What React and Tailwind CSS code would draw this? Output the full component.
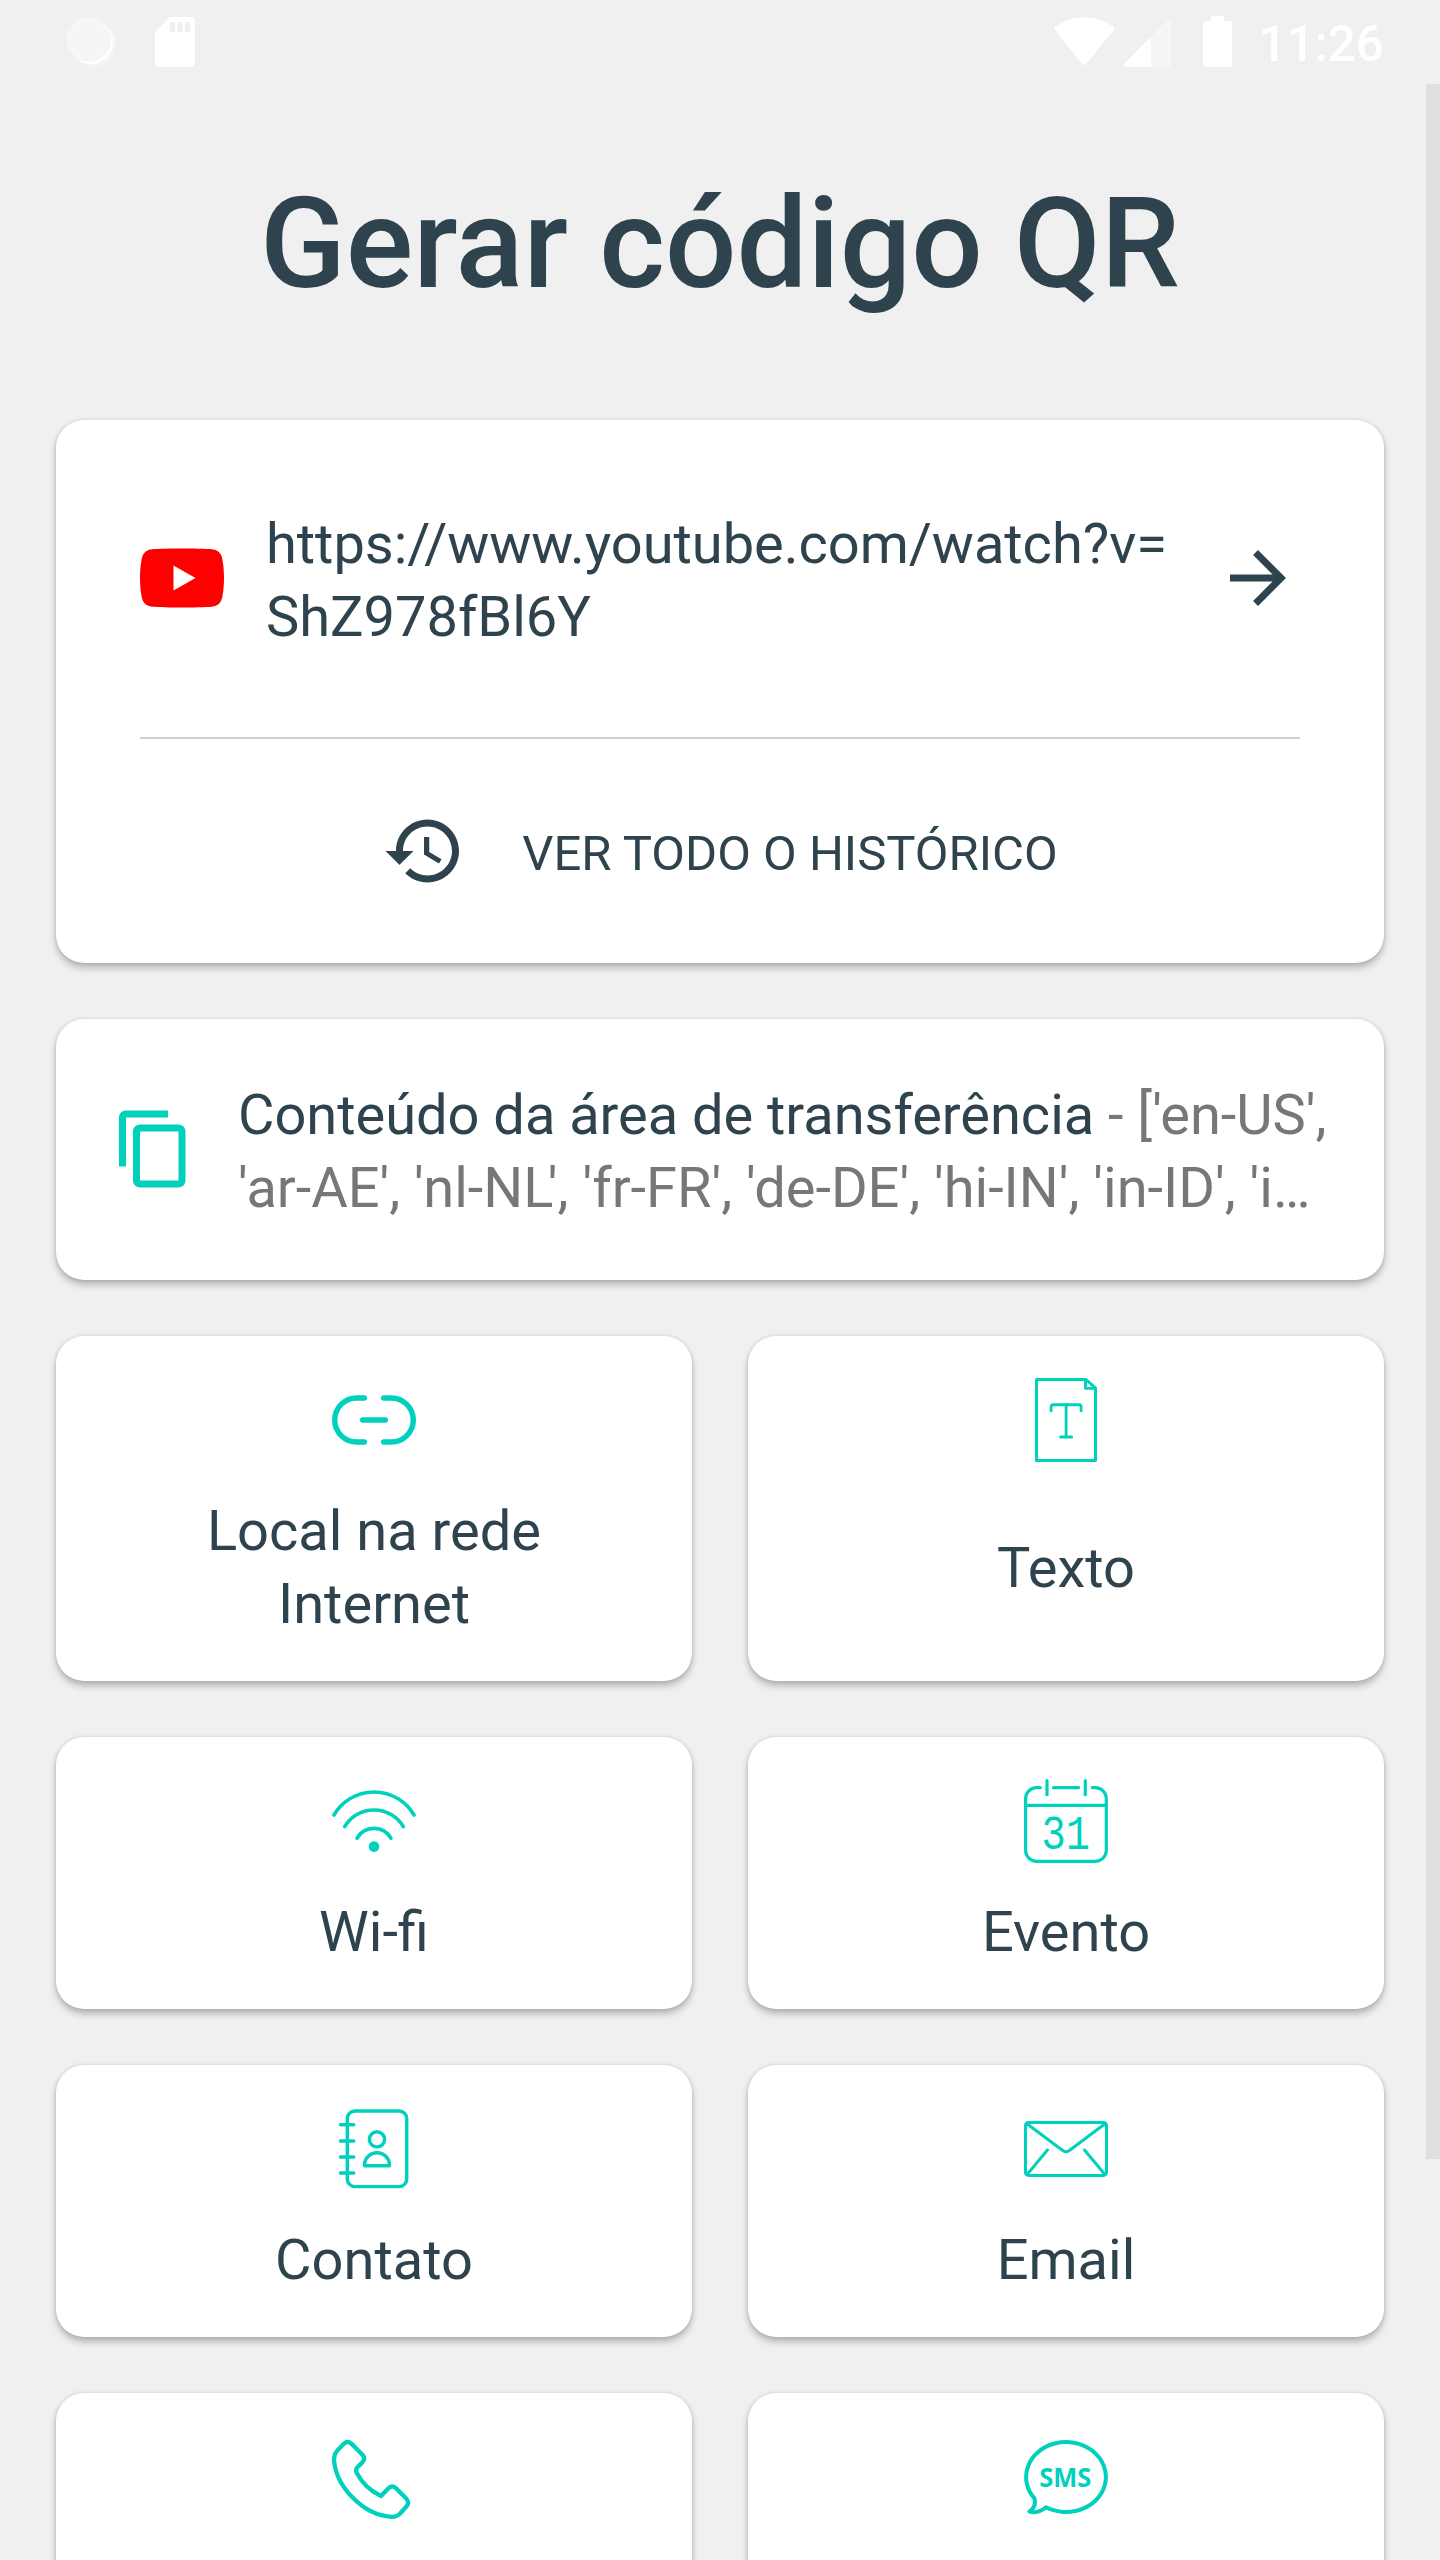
import { Type } from "lucide-react";

const TEAL = "#00d1bc";

function TileIcon({ stroke = 3.2, children }) {
  return (
    <svg
      viewBox="0 0 84 84"
      className="w-[84px] h-[84px] shrink-0"
      fill="none"
      stroke={TEAL}
      strokeWidth={stroke}
      strokeLinecap="round"
      strokeLinejoin="round"
    >
      {children}
    </svg>
  );
}

function LinkIcon() {
  return (
    <TileIcon stroke={5.4}>
      <path d="M32.3 20H24.7a22 22 0 0 0 0 44H32.3" />
      <path d="M51.7 20H59.3a22 22 0 0 1 0 44H51.7" />
      <path d="M30.7 42H53.3" />
    </TileIcon>
  );
}

function TextIcon() {
  return (
    <TileIcon stroke={3}>
      <path d="M12.5 1.5H62L71.5 10.2V82.5H12.5Z" />
      <path d="M61.5 1.5V10.2H71.5" />
      <Type x="19.6" y="18.6" width="45" height="48.4" color={TEAL} strokeWidth={1.5} preserveAspectRatio="none" />
    </TileIcon>
  );
}

function WifiIcon() {
  return (
    <TileIcon stroke={3.6}>
      <path d="M2 36A46.3 46.3 0 0 1 82 36" />
      <path d="M12.7 47.7A34 34 0 0 1 71.3 47.7" />
      <path d="M25 59.3A19.5 19.5 0 0 1 59 59.3" />
      <circle cx="42" cy="67.6" r="5.3" fill={TEAL} stroke="none" />
    </TileIcon>
  );
}

function CalendarIcon() {
  return (
    <TileIcon>
      <path d="M16.3 8.7H12.6a11 11 0 0 0 -11 11V71.3a11 11 0 0 0 11 11H71.3a11 11 0 0 0 11 -11V19.7a11 11 0 0 0 -11 -11H68.3" />
      <path d="M29.5 8.7H54.5M1.6 26.3H82.3M23 1.7V15.7M61.3 1.7V15.7" />
      <text
        x="17.5"
        y="69.8"
        fontSize="48"
        fill={TEAL}
        stroke="none"
        textLength="48.5"
        lengthAdjust="spacingAndGlyphs"
        className="font-['Liberation_Mono',monospace]"
      >
        31
      </text>
    </TileIcon>
  );
}

function ContactIcon() {
  return (
    <TileIcon stroke={3.4}>
      <rect x="15.3" y="4" width="59.4" height="75.6" rx="7.5" />
      <path d="M8.5 17.7H21.8M8.5 34H21.8M8.5 50H21.8M8.5 66H21.8" />
      <circle cx="45" cy="32.3" r="7.6" />
      <path d="M32.6 58.7H57.4V57.6A12.4 11.8 0 0 0 32.6 57.6Z" />
    </TileIcon>
  );
}

function EmailIcon() {
  return (
    <TileIcon stroke={3}>
      <rect x="1.5" y="15.4" width="81" height="53" rx="3" />
      <path d="M3.3 17L38 43Q42 46.4 46 43L80.7 17" />
      <path d="M23.5 43L3.5 67M60.5 43L80.5 67" />
    </TileIcon>
  );
}

function PhoneIcon() {
  return (
    <TileIcon stroke={4.3}>
      <path d="M12 8.6Q15.7 5.4 19.5 8.8L30.2 19.6Q34 23.6 30.2 27.6L26 31.6Q23 34.6 24.8 38Q32.5 53 49 61L56.8 53Q60.2 49.8 63.8 53L74.2 63.6Q78 67.7 74.2 71.8L67.4 79.3Q64.5 82 59.5 81.8C31 80.5 3.5 51 2 24.5Q2 19 5.2 15.6Z" />
    </TileIcon>
  );
}

function SmsIcon() {
  return (
    <TileIcon stroke={4}>
      <path d="M10.5 63.5A39.9 35 0 1 1 22 72.3Q14 79 5.5 76.5Q12.5 72 10.5 63.5Z" />
      <text
        x="15.2"
        y="51.8"
        fontSize="27"
        fontWeight="700"
        fill={TEAL}
        stroke="none"
        textLength="52"
        lengthAdjust="spacingAndGlyphs"
        className="font-['Open_Sans',sans-serif]"
      >
        SMS
      </text>
    </TileIcon>
  );
}

// 24dp material glyph
function Material({ d, className }) {
  return (
    <svg viewBox="0 0 24 24" className={`w-[84px] h-[84px] shrink-0 ${className || ""}`} fill="currentColor">
      <path d={d} />
    </svg>
  );
}

const tiles = [
  { id: "url", icon: LinkIcon, label: "Local na rede Internet" },
  { id: "text", icon: TextIcon, label: "Texto" },
  { id: "wifi", icon: WifiIcon, label: "Wi-fi" },
  { id: "event", icon: CalendarIcon, label: "Evento" },
  { id: "contact", icon: ContactIcon, label: "Contato" },
  { id: "email", icon: EmailIcon, label: "Email" },
  { id: "phone", icon: PhoneIcon },
  { id: "sms", icon: SmsIcon },
];

const ticks = Array.from({ length: 20 }, (_, i) => i * 18);

function StatusBar() {
  return (
    <header className="h-[84px] flex items-start pl-[66px] pr-[56px] shrink-0">
      <svg viewBox="66 0 52 84" className="w-[52px] h-[84px]">
        <circle cx="93.7" cy="44.7" r="22.3" fill="#f5f5f5" />
        <circle cx="91" cy="41.7" r="22.3" fill="#fff" />
        <circle cx="88.5" cy="39.4" r="22.3" fill="#f5f5f5" />
        {ticks.map((a) => (
          <path key={a} d="M88.5 18.4V25.5" stroke="#f8f8f8" strokeWidth="2.4" transform={`rotate(${a} 88.5 39.4)`} />
        ))}
      </svg>
      <svg viewBox="155 0 40 84" className="w-10 h-[84px] ml-[37px]">
        <path
          fill="#fff"
          fillRule="evenodd"
          d="M170 17H190.500a4.500 4.500 0 0 1 4.500 4.500V62.500a4.500 4.500 0 0 1 -4.500 4.500H159.500a4.500 4.500 0 0 1 -4.500 -4.500V32ZM170 22V32H175V22ZM177.500 22V32H182.500V22ZM185 22V32H190V22Z"
        />
      </svg>
      <div className="ml-auto flex items-start">
        <svg viewBox="1054 0 179 84" className="w-[179px] h-[84px]" fill="#fff">
          <path d="M1055 30.200Q1053.500 28 1055.500 26.600C1072 14 1097 14 1113 26.600Q1115 28 1113.600 30.200L1086.200 64Q1084.300 66.200 1082.300 64Z" />
          <path d="M1151 36.700V67H1126Q1123 66.500 1124.500 63.500Z" />
          <path d="M1151 36.700L1168 20Q1171 18.500 1171 21.500V64.500Q1171 67 1168.500 67H1151Z" fill="#f5f5f5" />
          <path d="M1211 16H1224V21H1229.500Q1232 21 1232 23.500V64.500Q1232 67 1229.500 67H1205.500Q1203 67 1203 64.500V23.500Q1203 21 1205.500 21H1211Z" />
        </svg>
        <span className="w-[151px] mt-[15px] text-right text-[49.5px] leading-[58px] font-medium text-white">11:26</span>
      </div>
    </header>
  );
}

function Card({ className, children }) {
  return (
    <div
      className={`bg-white rounded-[28px] shadow-[0_5px_7px_rgba(0,0,0,0.24),0_0_4px_rgba(0,0,0,0.12)] ${className}`}
    >
      {children}
    </div>
  );
}

function Tile({ icon: Icon, label }) {
  return (
    <Card className="min-h-[272px] flex flex-col items-center pt-[42px] pb-10 px-[110px]">
      <Icon />
      {label && <div className="mt-[33px] flex-1 flex items-center text-center">{label}</div>}
    </Card>
  );
}

export default function App() {
  return (
    <div className="relative w-[1440px] h-[2560px] overflow-hidden bg-[#f0f0f0] text-[#2f434e] font-[Roboto,sans-serif] text-[56px] leading-[73px] flex flex-col">
      <StatusBar />
      <h1 className="mt-[86px] text-[126px] leading-[148px] font-medium text-center">Gerar código QR</h1>

      <main className="mt-[102px] px-14 flex flex-col gap-14">
        <Card className="h-[543px] px-[84px] flex flex-col">
          <div className="h-[317px] pb-px flex items-center">
            <svg viewBox="0 0 84 60" className="w-[84px] h-[60px] shrink-0">
              <path
                fill="#f00"
                d="M42 0.500C52 0.500 66 0.800 72 1.300Q80.500 2 82.200 10.500C83.300 16 84 22 84 30S83.300 44 82.200 49.500Q80.500 58 72 58.700C66 59.200 52 59.500 42 59.500S18 59.200 12 58.700Q3.500 58 1.800 49.500C0.700 44 0 38 0 30S0.700 16 1.800 10.500Q3.500 2 12 1.300C18 0.800 32 0.500 42 0.500Z"
              />
              <path fill="#fff" d="M33.500 17.500L55.500 30L33.500 42.500Z" />
            </svg>
            <p className="ml-[42px] pt-1.5 flex-1 break-all tracking-[-0.03px]">
              https://www.youtube.com/watch?v=
              <br />
              ShZ978fBl6Y
            </p>
            <Material d="M12 4l-1.410 1.410L16.170 11H4v2h12.170l-5.580 5.590L12 20l8-8z" />
          </div>
          <div className="h-[2px] bg-[#d1d1d1]" />
          <div className="flex-1 flex items-center justify-center gap-14">
            <Material d="M13 3c-4.970 0-9 4.030-9 9H1l3.890 3.890.070.140L9 12H6c0-3.870 3.130-7 7-7s7 3.130 7 7-3.130 7-7 7c-1.930 0-3.680-.790-4.940-2.060l-1.420 1.420C8.270 19.990 10.510 21 13 21c4.970 0 9-4.030 9-9s-4.030-9-9-9zm-1 5v5l4.280 2.540.720-1.210-3.500-2.080V8H12z" />
            <span className="pt-1 text-[49px]">VER TODO O HISTÓRICO</span>
          </div>
        </Card>

        <Card className="h-[261px] pl-14 pr-[42px] pb-px flex items-center">
          <Material
            className="text-[#00d1bc]"
            d="M16 1H4c-1.100 0-2 .9-2 2v14h2V3h12V1zm3 4H8c-1.100 0-2 .9-2 2v14c0 1.100.9 2 2 2h11c1.100 0 2-.9 2-2V7c0-1.100-.9-2-2-2zm0 16H8V7h11v14z"
          />
          <p className="ml-[42px] pt-1.5 whitespace-nowrap tracking-[-0.03px]">
            Conteúdo da área de transferência
            <span className="text-[#777]">
              {" "}- ['en-US',
              <br />
              'ar-AE', 'nl-N<span className="tracking-[-5.5px]">L</span>', 'fr-FR', 'de-DE', 'hi-IN', 'in-ID', 'i…
            </span>
          </p>
        </Card>

        <div className="grid grid-cols-2 gap-14">
          {tiles.map((t) => (
            <Tile key={t.id} icon={t.icon} label={t.label} />
          ))}
        </div>
      </main>

      {/* scroll indicator */}
      <div className="absolute right-0 top-[84px] w-[14px] h-[2075px] bg-[#dfdfdf]" />
    </div>
  );
}
